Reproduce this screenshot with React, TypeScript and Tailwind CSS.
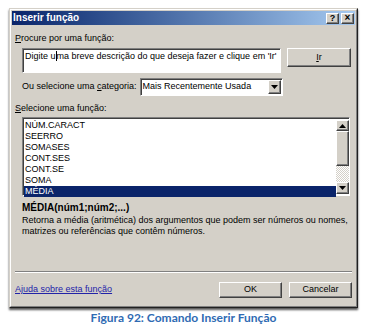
import React from "react";

const raised =
  "border border-t-white border-l-white border-r-[#404040] border-b-[#404040] shadow-[inset_-1px_-1px_0_#808080] bg-[#d4d0c8]";
const sunken =
  "border border-t-[#808080] border-l-[#808080] border-r-white border-b-white shadow-[inset_1px_1px_0_#404040]";

const functions = ["NÚM.CARACT", "SEERRO", "SOMASES", "CONT.SES", "CONT.SE", "SOMA", "MÉDIA"];

const Arrow: React.FC<{ down?: boolean }> = ({ down }) => (
  <svg width="7" height="4" viewBox="0 0 7 4">
    {down ? <polygon points="0,0 7,0 3.5,4" fill="#000" /> : <polygon points="0,4 7,4 3.5,0" fill="#000" />}
  </svg>
);

const App: React.FC = () => {
  return (
    <div className="w-[367px] h-[335px] bg-white font-['Liberation_Sans',Arial,sans-serif] text-[9px] text-black">
      <div className="pt-[8px] pl-[9px]">
        <div className="w-[349px] h-[300px] border border-t-[#d4d0c8] border-l-[#d4d0c8] border-r-[#202020] border-b-[#202020] bg-[#d4d0c8] shadow-[0_2px_2px_#555]">
          <div className="h-full border border-t-white border-l-white border-r-[#808080] border-b-[#808080] p-px flex flex-col">
            {/* title bar */}
            <div className="h-[14px] flex items-center justify-between bg-gradient-to-r from-[#0a246a] to-[#a6caf0] pl-[1px] pr-[1px]">
              <span className="text-white font-bold text-[10px] leading-none">Inserir função</span>
              <div className="flex gap-[2px]">
                <div className={`${raised} w-[13px] h-[11px] flex items-center justify-center text-[9px] font-bold leading-none`}>?</div>
                <div className={`${raised} w-[13px] h-[11px] flex items-center justify-center text-[10px] font-bold leading-none`}>×</div>
              </div>
            </div>

            {/* body */}
            <div className="flex flex-col pl-[3px] pr-[3px]">
              <div className="mt-[7px] h-[13px] leading-[13px]">
                <span className="underline">P</span>rocure por uma função:
              </div>

              <div className="mt-[3px] flex items-start pl-[7px]">
                <div className={`${sunken} bg-white w-[259px] h-[25px] px-[2px] pt-[2px] leading-[11px] whitespace-nowrap`}>
                  Digite u
                  <span className="inline-block w-px h-[10px] bg-black align-[-2px]" />
                  ma breve descrição do que deseja fazer e clique em 'Ir'
                </div>
                <button className={`${raised} ml-[6px] w-[64px] h-[19px] text-[9px] flex items-center justify-center`}>
                  <span className="underline">I</span>r
                </button>
              </div>

              <div className="mt-[5px] flex items-center pl-[7px] h-[18px]">
                <span>
                  Ou selecione uma <span className="underline">c</span>ategoria:
                </span>
                <div className={`${sunken} bg-white ml-[3px] w-[143px] h-[18px] flex items-center justify-between pl-[2px] pr-px`}>
                  <span>Mais Recentemente Usada</span>
                  <div className={`${raised} w-[13px] h-[14px] flex items-center justify-center`}>
                    <Arrow down />
                  </div>
                </div>
              </div>

              <div className="mt-[6px] h-[13px] leading-[13px]">
                <span className="underline">S</span>elecione uma função:
              </div>

              <div className="mt-[2px] ml-[7px] w-[328px] h-[79px] flex bg-white border border-t-[#808080] border-l-[#808080] border-r-white border-b-white shadow-[inset_1px_1px_0_#404040]">
                <div className="flex-1 flex flex-col pt-[2px] pl-[1px]">
                  {functions.map((f) => (
                    <div
                      key={f}
                      className={`h-[11px] leading-[11px] pl-[1px] ${f === "MÉDIA" ? "bg-[#0a246a] text-white" : ""}`}
                    >
                      {f}
                    </div>
                  ))}
                </div>
                <div className="w-[13px] mt-[2px] mb-px flex flex-col">
                  <div className={`${raised} h-[11px] flex items-center justify-center`}>
                    <Arrow />
                  </div>
                  <div className={`${raised} h-[35px]`} />
                  <div className="flex-1 bg-[repeating-conic-gradient(#ffffff_0%_25%,#d4d0c8_0%_50%)] bg-size-[2px_2px]" />
                  <div className={`${raised} h-[12px] flex items-center justify-center`}>
                    <Arrow down />
                  </div>
                </div>
              </div>

              <div className="mt-[5px] ml-[7px] h-[13px] leading-[13px] font-bold text-[10px]">MÉDIA(núm1;núm2;...)</div>
              <div className="mt-px ml-[7px] leading-[11px]">
                Retorna a média (aritmética) dos argumentos que podem ser números ou nomes,
                <br />
                matrizes ou referências que contêm números.
              </div>

              <div className="mt-[34px] h-[2px] border-t border-t-[#808080] border-b border-b-white" />

              <div className="mt-[9px] flex items-center justify-between h-[16px]">
                <a className="text-[#2323a8] underline">Ajuda sobre esta função</a>
                <div className="flex gap-[7px]">
                  <button className={`${raised} w-[63px] h-[16px] text-[9px] flex items-center justify-center`}>OK</button>
                  <button className={`${raised} w-[63px] h-[16px] text-[9px] flex items-center justify-center`}>Cancelar</button>
                </div>
              </div>
            </div>
          </div>
        </div>
      </div>
      <div className="mt-[3px] text-center font-['Lato',sans-serif] font-bold text-[12px] leading-[14px] text-[#2f6bb3]">
        Figura 92: Comando Inserir Função
      </div>
    </div>
  );
};

export default App;
